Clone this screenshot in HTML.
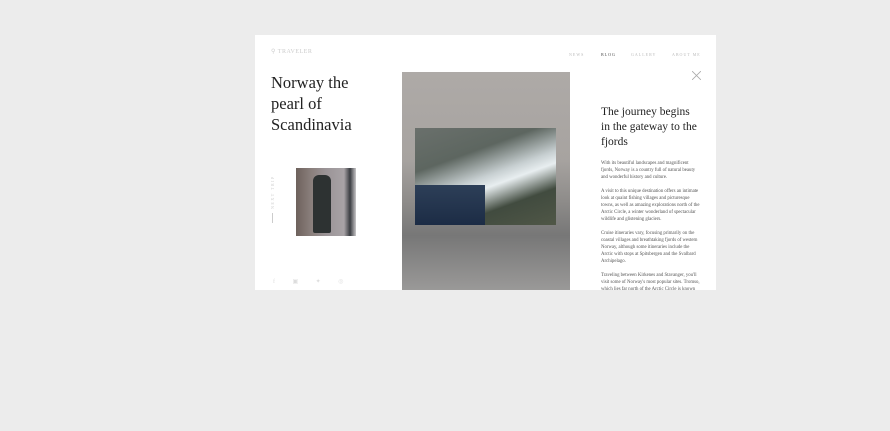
<!DOCTYPE html>
<html><head><style>
body{margin:0;width:890px;height:431px;background:#ececec;position:relative;overflow:hidden;font-family:"Liberation Serif",serif;}
.card{position:absolute;left:255px;top:35px;width:461px;height:255px;background:#fff;overflow:hidden;}
.a{position:absolute;}
.nav{top:17px;font-size:4px;letter-spacing:1px;color:#bbb;}
h1{position:absolute;left:16px;top:37px;margin:0;font-weight:normal;font-size:16.5px;line-height:21px;color:#222;}
h2{position:absolute;left:346px;top:70px;margin:0;font-weight:normal;font-size:11.5px;line-height:15px;color:#222;width:100px;}
.txt{position:absolute;left:346px;top:125px;width:100px;font-size:4.8px;line-height:7px;color:#555;}
.txt p{margin:0 0 7px;}
</style></head><body>
<div class="card">
<div class="a" style="left:16px;top:13px;font-size:6px;color:#ccc;letter-spacing:.5px">&#9906; TRAVELER</div>
<div class="a nav" style="left:314px">NEWS</div>
<div class="a nav" style="left:346px;color:#444">BLOG</div>
<div class="a nav" style="left:376px">GALLERY</div>
<div class="a nav" style="left:417px">ABOUT ME</div>
<svg class="a" style="left:437px;top:36px" width="9" height="9"><path d="M0 0L9 9M9 0L0 9" stroke="#aaa" stroke-width=".8"/></svg>
<h1>Norway the<br>pearl of<br>Scandinavia</h1>
<div class="a" style="left:15px;top:174px;transform:rotate(-90deg);transform-origin:0 0;font-size:4px;letter-spacing:1.5px;color:#ccc">NEXT TRIP</div>
<div class="a" style="left:17px;top:178px;width:1px;height:10px;background:#ccc"></div>
<div class="a" style="left:41px;top:133px;width:60px;height:68px;background:linear-gradient(90deg,#6d615c 0,#8a7f7c 25%,#9b9497 50%,#a8a3a6 80%,#3a3d42 90%,#c9c7c9 100%)"></div>
<div class="a" style="left:58px;top:140px;width:18px;height:58px;background:#2d3232;border-radius:6px 6px 2px 2px"></div>
<div class="a" style="left:18px;top:243px;font-size:6px;color:#ddd;letter-spacing:8px">f ▣ ✦ ◎</div>
<div class="a" style="left:147px;top:37px;width:168px;height:218px;background:linear-gradient(#aeaaa7 0,#a7a3a0 40%,#8d8b89 60%,#777 75%,#9a9998 100%)"></div>
<div class="a" style="left:160px;top:93px;width:141px;height:97px;background:linear-gradient(160deg,#6a706c 0,#5d6660 30%,#c8d0d2 50%,#e8eef0 58%,#414b3f 75%,#505747 100%)"></div>
<div class="a" style="left:160px;top:150px;width:70px;height:40px;background:linear-gradient(#2d3f58,#1c2c45)"></div>
<h2>The journey begins in the gateway to the fjords</h2>
<div class="txt">
<p>With its beautiful landscapes and magnificent fjords, Norway is a country full of natural beauty and wonderful history and culture.</p>
<p>A visit to this unique destination offers an intimate look at quaint fishing villages and picturesque towns, as well as amazing explorations north of the Arctic Circle, a winter wonderland of spectacular wildlife and glistening glaciers.</p>
<p>Cruise itineraries vary, focusing primarily on the coastal villages and breathtaking fjords of western Norway, although some itineraries include the Arctic with stops at Spitsbergen and the Svalbard Archipelago.</p>
<p>Traveling between Kirkenes and Stavanger, you'll visit some of Norway's most popular sites. Tromso, which lies far north of the Arctic Circle is known</p>
</div>
</div>
</body></html>
